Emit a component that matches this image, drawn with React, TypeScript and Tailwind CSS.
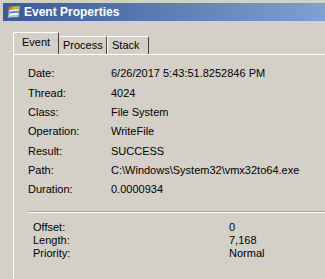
import React from "react";

const rows: [string, string][] = [
  ["Date:", "6/26/2017 5:43:51.8252846 PM"],
  ["Thread:", "4024"],
  ["Class:", "File System"],
  ["Operation:", "WriteFile"],
  ["Result:", "SUCCESS"],
  ["Path:", "C:\\Windows\\System32\\vmx32to64.exe"],
  ["Duration:", "0.0000934"],
];

const details: [string, string][] = [
  ["Offset:", "0"],
  ["Length:", "7,168"],
  ["Priority:", "Normal"],
];

function WindowIcon() {
  return (
    <svg width="16" height="16" viewBox="0 0 16 16">
      <defs>
        <linearGradient id="strip" x1="0" x2="1" y1="0" y2="0">
          <stop offset="0" stopColor="#e0502a" />
          <stop offset="0.5" stopColor="#f0b030" />
          <stop offset="1" stopColor="#7cc040" />
        </linearGradient>
      </defs>
      <path d="M3 3 L14 2 L13 13 L1.5 14 Z" fill="#e8e8e4" stroke="#606060" strokeWidth="0.8" />
      <path d="M3 3 L14 2 L13.7 5 L2.7 6 Z" fill="url(#strip)" />
      <path d="M3.5 8 L12.5 7.2 L12.2 11.5 L3 12.3 Z" fill="#fafafa" stroke="#8090a8" strokeWidth="0.7" />
      <path d="M3.7 8.6 L12.4 7.8" stroke="#3a6ac8" strokeWidth="1.2" />
    </svg>
  );
}

export default function App() {
  return (
    <div
      className="w-[325px] h-[279px] overflow-hidden bg-[#d4d0c8] text-[11px] text-black"
      style={{ fontFamily: '"Liberation Sans", Arial, sans-serif' }}
    >
      {/* title bar */}
      <div className="ml-[3px] mt-[3px] h-[18px] flex items-center bg-gradient-to-r from-[#3a5a98] to-[#7ea1d0]">
        <div className="ml-[3px] mr-[2px] flex items-center">
          <WindowIcon />
        </div>
        <span className="text-white font-bold text-[12px] leading-none">Event Properties</span>
      </div>

      {/* tabs */}
      <div className="ml-[13px] mt-[12px]">
        <div className="flex items-end h-[21px]">
          <div className="relative z-10 h-[22px] w-[46px] border-l border-t border-white border-r border-r-[#404040] rounded-t-[2px] bg-[#d4d0c8] flex items-center pl-[8px] pb-[2px]">
            Event
          </div>
          <div className="h-[18px] w-[48px] border-t border-white border-r border-r-[#404040] rounded-t-[2px] flex items-center pl-[4px]">
            Process
          </div>
          <div className="h-[18px] w-[42px] border-l border-t border-white border-r border-r-[#404040] rounded-t-[2px] flex items-center pl-[4px]">
            Stack
          </div>
        </div>

        {/* panel */}
        <div className="h-[240px] border-t border-l border-white pt-[9px]">
          <div className="pl-[14px]">
            {rows.map(([label, value]) => (
              <div key={label} className="flex h-[19.3px] items-center">
                <span className="w-[83px]">{label}</span>
                <span>{value}</span>
              </div>
            ))}
          </div>

          <div className="ml-[15px] mt-[12px] border-t border-[#a0a0a0] border-b border-b-white" />

          <div className="pl-[19px] pt-[8px] leading-[13px]">
            {details.map(([label, value]) => (
              <div key={label} className="flex">
                <span className="w-[196px]">{label}</span>
                <span>{value}</span>
              </div>
            ))}
          </div>
        </div>
      </div>
    </div>
  );
}
